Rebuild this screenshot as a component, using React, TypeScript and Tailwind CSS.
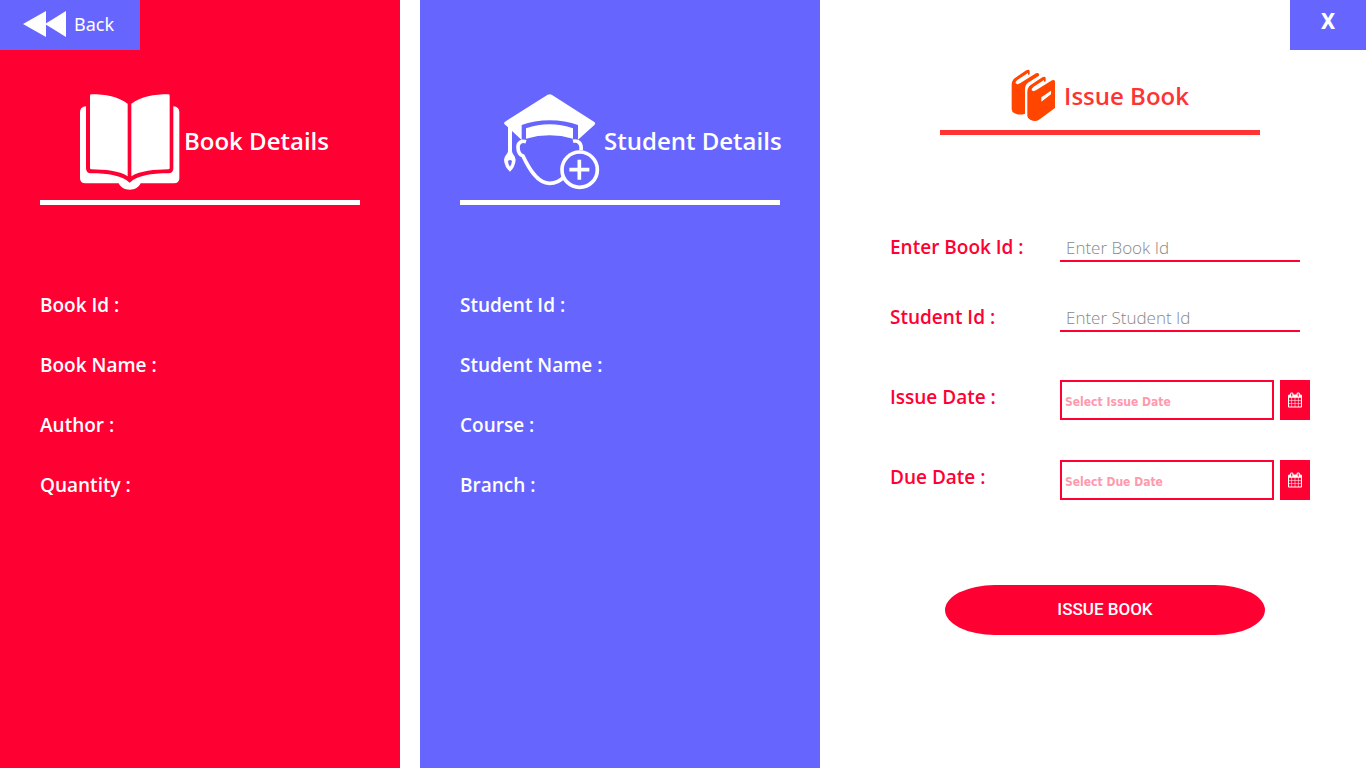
import React from "react";

function BackIcon() {
  return (
    <svg viewBox="0 0 43 26" className="h-[26px] w-[43px] fill-white" aria-hidden="true">
      <path d="M0 13 23 0V26ZM22 13 43 0V26Z" />
    </svg>
  );
}

function OpenBookIcon() {
  return (
    <svg viewBox="60 41 300 288" className="h-24 w-[100px] shrink-0 fill-white" aria-hidden="true">
      <path d="M94 42C137 42 174 49 203 70V288C177 271 137 268 94 267Q90 267 90 263V46Q90 42 94 42Z" />
      <path d="M325 42C282 42 243 49 214 70V288C242 271 282 268 325 267Q329 267 329 263V46Q329 42 325 42Z" />
      <path d="M78 78V264Q78 279 93 279C145 279 184 285 209 307C234 285 273 279 325 279Q340 279 340 264V78Q358 79 358 96V294Q358 309 342 309H242C236 321 225 328 209 328C193 328 182 321 176 309H76Q60 309 60 294V96Q60 79 78 78Z" />
    </svg>
  );
}

function StudentIcon() {
  return (
    <svg viewBox="30 41 300 288" className="h-24 w-[100px] shrink-0" aria-hidden="true">
      <path
        fill="white"
        fillRule="evenodd"
        d="M173 43Q179 40 185 43L313 125Q318 129 313 134L264 178V134C215 115 143 115 95 134V179L66 152V213Q67 220 71 224Q77 231 77 239Q75 261 60 274Q44 261 42 239Q42 231 48 224Q53 219 54 213V141L44 132Q40 128 45 124ZM60 239L54 241Q54 252 60 259Q65 252 66 241Z"
      />
      <path fill="white" d="M108 144Q179 119 249 144V175Q179 155 108 175Z" />
      <g fill="none" stroke="white" strokeWidth="11">
        <path d="M108 184C94 180 84 187 84 199C84 215 90 224 99 227C116 263 141 309 179 309C196 309 210 303 221 290" />
        <path d="M249 183C264 179 276 188 273 210" />
        <circle cx="269" cy="268" r="53" />
        <path d="M238 268H298M268 238V298" />
      </g>
    </svg>
  );
}

function BooksIcon() {
  return (
    <svg viewBox="40 28 135 159" className="h-[53px] w-[45px] shrink-0" aria-hidden="true">
      <path
        fill="#ff4500"
        d="M42 76Q42 62 52 55L86 32Q94 28 96 33V43Q95 46 91 45V40L60 60Q52 66 54 71Q59 76 67 71L115 41Q121 38 124 43V48L91 69Q82 76 82 88V162Q66 168 51 161Q42 157 42 149Z"
      />
      <path
        fill="#ff4500"
        fillRule="evenodd"
        d="M89 97Q89 83 99 76L134 53Q142 49 144 54V64Q143 67 139 66V61L108 81Q100 87 102 92Q107 97 115 92L163 62Q172 58 172 66V145L124 180Q113 187 99 181Q89 176 89 169ZM131 113V126L160 104V93Z"
      />
    </svg>
  );
}

function CalendarIcon() {
  return (
    <svg viewBox="64 0 1664 1792" className="h-4 w-[14px] fill-white" aria-hidden="true">
      <path d="M192 1664h288v-288h-288v288zM544 1664h320v-288h-320v288zM192 1312h288v-320h-288v320zM544 1312h320v-320h-320v320zM192 928h288v-288h-288v288zM928 1664h320v-288h-320v288zM544 928h320v-288h-320v288zM1312 1664h288v-288h-288v288zM928 1312h320v-320h-320v320zM576 448v-288q0-13-9.500-22.500t-22.500-9.500h-64q-13 0-22.500 9.500t-9.500 22.500v288q0 13 9.500 22.500t22.500 9.500h64q13 0 22.500-9.500t9.500-22.500zM1312 1312h288v-320h-288v320zM928 928h320v-288h-320v288zM1312 928h288v-288h-288v288zM1344 448v-288q0-13-9.500-22.500t-22.500-9.500h-64q-13 0-22.500 9.500t-9.500 22.500v288q0 13 9.500 22.500t22.500 9.500h64q13 0 22.500-9.500t9.500-22.500zM1728 384v1280q0 52-38 90t-90 38h-1408q-52 0-90-38t-38-90v-1280q0-52 38-90t90-38h128v-96q0-66 47-113t113-47h64q66 0 113 47t47 113v96h384v-96q0-66 47-113t113-47h64q66 0 113 47t47 113v96h128q52 0 90 38t38 90z" />
    </svg>
  );
}

type DetailsProps = { title: string; icon: React.ReactNode; labels: string[] };

function Details({ title, icon, labels }: DetailsProps) {
  return (
    <div className="px-10 text-white">
      <div className="flex items-center gap-1 border-b-[5px] border-white pb-[10px] pl-10">
        {icon}
        <h2 className="pb-0.5 text-[24px] leading-8 font-semibold whitespace-nowrap">{title}</h2>
      </div>
      <dl className="mt-[85px] flex flex-col gap-[30px] text-[19px] leading-[30px] font-semibold">
        {labels.map((label) => (
          <div key={label} className="flex">
            <dt>{label} :</dt>
            <dd />
          </div>
        ))}
      </dl>
    </div>
  );
}

type FieldProps = { id: string; label: string; placeholder: string };

function TextField({ id, label, placeholder }: FieldProps) {
  return (
    <div className="flex h-[30px] items-center">
      <label htmlFor={id} className="w-[170px] shrink-0">
        {label} :
      </label>
      <input
        id={id}
        type="text"
        placeholder={placeholder}
        className="h-[30px] w-60 min-w-0 border-b-2 border-[#ff0033] bg-transparent px-1.5 pt-1 text-[17px] font-light text-black outline-none placeholder:text-[#888888]"
      />
    </div>
  );
}

function DateField({ id, label, placeholder }: FieldProps) {
  return (
    <div className="flex h-10">
      <label htmlFor={id} className="w-[170px] shrink-0 pt-0.5">
        {label} :
      </label>
      <input
        id={id}
        type="text"
        placeholder={placeholder}
        className="mr-1.5 min-w-0 flex-1 border-2 border-[#ff0033] bg-white px-[3px] pt-1 font-['DejaVu_Sans_Condensed','DejaVu_Sans',sans-serif] text-[12px] font-bold text-[#ff0033] outline-none placeholder:text-[#ff99ad]"
      />
      <button
        type="button"
        aria-label={placeholder}
        className="flex w-[30px] shrink-0 items-center justify-center bg-[#ff0033]"
      >
        <CalendarIcon />
      </button>
    </div>
  );
}

export default function App() {
  return (
    <main className="grid min-h-screen grid-cols-[minmax(0,400fr)_minmax(0,400fr)_minmax(420px,526fr)] gap-5 bg-white font-['Open_Sans',sans-serif]">
      <section className="bg-[#ff0033]">
        <button
          type="button"
          className="mb-11 flex h-[50px] w-[140px] items-center gap-2 bg-[#6666ff] pb-0.5 pl-[23px] font-['Noto_Sans',sans-serif] text-[18px] text-white"
        >
          <BackIcon />
          <span>Back</span>
        </button>
        <Details
          title="Book Details"
          icon={<OpenBookIcon />}
          labels={["Book Id", "Book Name", "Author", "Quantity"]}
        />
      </section>

      <section className="bg-[#6666ff] pt-[94px]">
        <Details
          title="Student Details"
          icon={<StudentIcon />}
          labels={["Student Id", "Student Name", "Course", "Branch"]}
        />
      </section>

      <section className="flex flex-col">
        <button
          type="button"
          aria-label="Close"
          className="h-[50px] w-[76px] self-end bg-[#6666ff] pb-1.5 font-['DejaVu_Sans_Condensed','DejaVu_Sans',sans-serif] text-[21px] leading-6 font-bold text-white"
        >
          X
        </button>
        <form className="flex flex-col pr-14 pl-[50px]">
          <div className="mt-[19px] flex w-80 items-center justify-center gap-2 self-center border-b-[5px] border-[#ff3333] pb-2">
            <BooksIcon />
            <h1 className="text-[24px] leading-8 font-semibold whitespace-nowrap text-[#ff3333]">Issue Book</h1>
          </div>
          <div className="mt-[97px] flex flex-col gap-10 text-[19px] leading-[30px] font-semibold text-[#ff0033]">
            <TextField id="book-id" label="Enter Book Id" placeholder="Enter Book Id" />
            <TextField id="student-id" label="Student Id" placeholder="Enter Student Id" />
          </div>
          <div className="mt-12 flex flex-col gap-10 text-[19px] leading-[30px] font-semibold text-[#ff0033]">
            <DateField id="issue-date" label="Issue Date" placeholder="Select Issue Date" />
            <DateField id="due-date" label="Due Date" placeholder="Select Due Date" />
          </div>
          <button
            type="submit"
            className="mt-[85px] ml-2.5 h-[50px] w-80 self-center rounded-[50px/25px] bg-[#ff0033] font-['Roboto',sans-serif] text-[17px] font-medium text-white"
          >
            ISSUE BOOK
          </button>
        </form>
      </section>
    </main>
  );
}
